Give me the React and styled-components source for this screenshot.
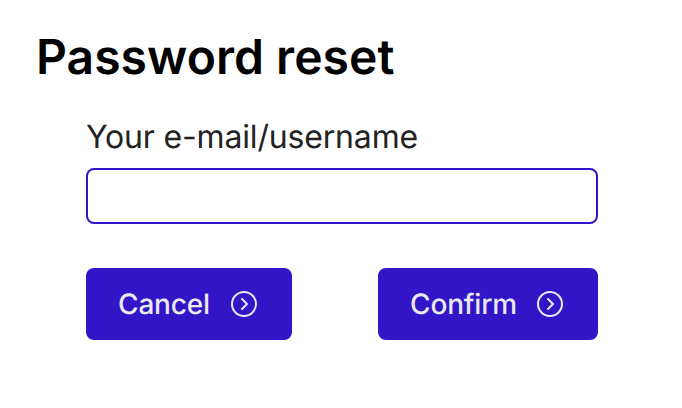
import React from "react";
import styled, { createGlobalStyle } from "styled-components";

const GlobalStyle = createGlobalStyle`
  * { box-sizing: border-box; }
  body { margin: 0; background: #fff; font-family: "Inter", sans-serif; text-rendering: geometricPrecision; -webkit-font-smoothing: antialiased; }
`;

const Page = styled.main`
  min-height: 408px;
  padding: 28px 84px 0 36px;
`;

const Title = styled.h1`
  margin: 0;
  color: #000;
  font-size: 48px;
  font-weight: 600;
  line-height: 58px;
  letter-spacing: 0.05px;
  white-space: nowrap;
`;

const Form = styled.form`
  display: flex;
  flex-direction: column;
  padding: 31px 0 0 50px;
`;

const Label = styled.label`
  color: #222;
  font-size: 32px;
  font-weight: 400;
  line-height: 39px;
  letter-spacing: -0.17px;
`;

const Input = styled.input`
  height: 56px;
  margin-top: 12px;
  padding: 0 16px;
  border: 2px solid #3115c6;
  border-radius: 8px;
  background: #fff;
  font: inherit;
  font-size: 28px;
  outline: none;
`;

const Actions = styled.div`
  display: flex;
  justify-content: space-between;
  margin-top: 44px;
`;

const Button = styled.button`
  display: flex;
  align-items: center;
  justify-content: space-between;
  width: ${({ $width }) => $width}px;
  height: 72px;
  padding: 0 32px;
  border: 0;
  border-radius: 8px;
  background: #3115c6;
  color: #ebe8f0;
  font: inherit;
  font-size: 28px;
  font-weight: 500;
  letter-spacing: -0.16px;
  text-rendering: inherit;
`;

const Icon = styled.svg`
  width: 32px;
  height: 32px;
  fill: none;
  stroke: currentColor;
  stroke-width: 2;
  stroke-linecap: round;
  stroke-linejoin: round;
`;

function ChevronCircle() {
  return (
    <Icon viewBox="0 0 32 32" aria-hidden="true">
      <circle cx="16" cy="16" r="12" />
      <path d="M14 11l5 5-5 5" />
    </Icon>
  );
}

export default function App() {
  return (
    <>
      <GlobalStyle />
      <Page>
        <Title>Password reset</Title>
        <Form>
          <Label htmlFor="account">Your e-mail/username</Label>
          <Input id="account" type="text" />
          <Actions>
            <Button type="button" $width={206}>Cancel<ChevronCircle /></Button>
            <Button type="button" $width={220}>Confirm<ChevronCircle /></Button>
          </Actions>
        </Form>
      </Page>
    </>
  );
}
